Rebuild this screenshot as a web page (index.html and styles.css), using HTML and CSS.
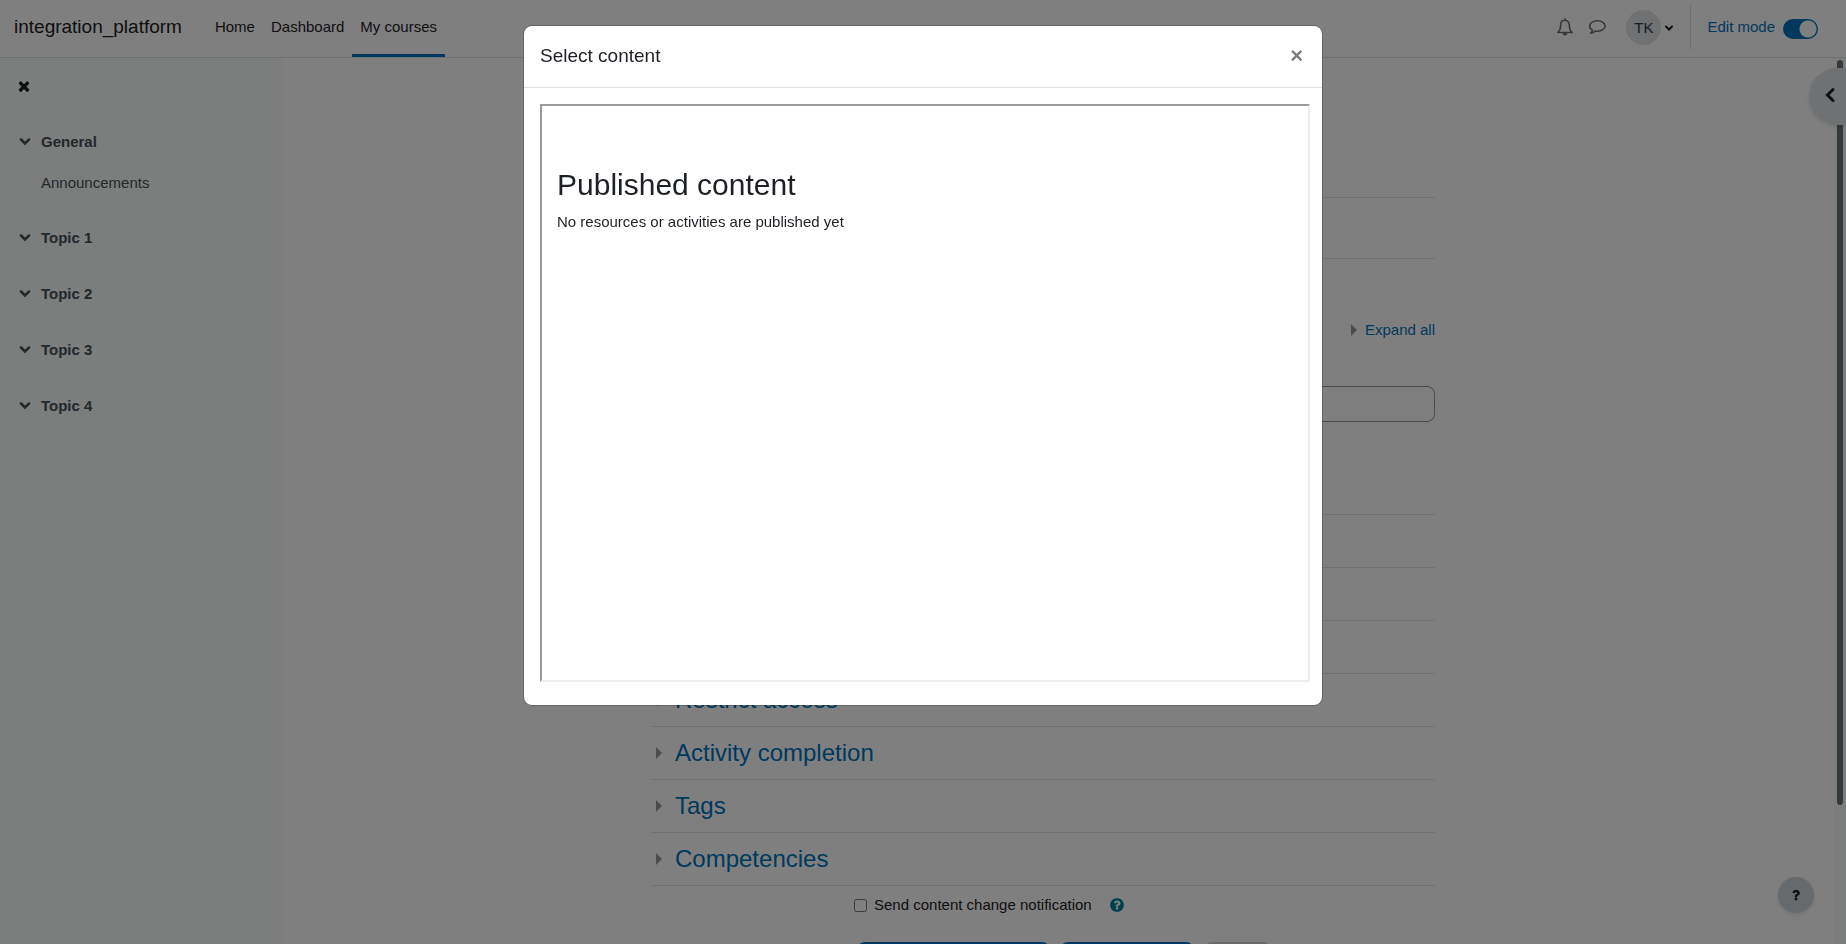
FILE: index.html
```html
<!DOCTYPE html>
<html lang="en">
<head>
  <meta charset="UTF-8">
  <meta name="viewport" content="width=device-width, initial-scale=1.0">
  <title>integration_platform</title>
  <link rel="stylesheet" href="styles.css">
</head>
<body>

  <header class="navbar">
    <a class="brand" href="#">integration_platform</a>
    <nav class="main-nav">
      <a href="#">Home</a>
      <a href="#">Dashboard</a>
      <a class="active" href="#">My courses</a>
    </nav>
    <div class="user-nav">
      <button class="icon-btn" type="button" aria-label="Notifications">
        <svg width="16" height="18" viewBox="0 0 16 18" fill="none" stroke="currentColor" stroke-width="1.6" stroke-linejoin="round">
          <path d="M8 .3v2M8 2.3C5.200 2.300 3.700 4.400 3.700 6.900c0 3.700-.9 5.800-2.900 7.600h14.400c-2-1.800-2.900-3.900-2.900-7.600C12.300 4.400 10.800 2.300 8 2.300z"/>
          <path d="M6.400 15.200a1.600 1.600 0 0 0 3.200 0z" fill="currentColor"/>
        </svg>
      </button>
      <button class="icon-btn" type="button" aria-label="Messages">
        <svg width="18" height="16" viewBox="0 0 18 16" fill="none" stroke="currentColor" stroke-width="1.6" stroke-linejoin="round">
          <path d="M9.400 1.800C5 1.800 1.600 4.100 1.600 7c0 1.700 1.100 3.100 2.900 4.100-.2 1.200-.9 2.200-1.900 3.100 2-.2 3.600-.9 4.800-2.200.6.100 1.300.2 2 .2 4.300 0 7.700-2.300 7.700-5.200S13.700 1.800 9.400 1.800z"/>
        </svg>
      </button>
      <button class="user-menu" type="button">
        <span class="avatar">TK</span>
        <svg width="8" height="8" viewBox="0 0 8 8" fill="none" stroke="currentColor" stroke-width="2" stroke-linecap="round"><path d="M1 3.500l3 3 3-3"/></svg>
      </button>
      <div class="edit-mode">
        <label for="editmode">Edit mode</label>
        <input type="checkbox" id="editmode" checked>
      </div>
    </div>
  </header>

  <div class="page">
    <aside class="drawer">
      <button class="drawer-close" type="button" aria-label="Close course index">
        <svg width="16" height="16" viewBox="0 0 1792 1792" fill="currentColor"><path d="M1490 1322q0 40-28 68l-136 136q-28 28-68 28t-68-28l-294-294-294 294q-28 28-68 28t-68-28l-136-136q-28-28-28-68t28-68l294-294-294-294q-28-28-28-68t28-68l136-136q28-28 68-28t68 28l294 294 294-294q28-28 68-28t68 28l136 136q28 28 28 68t-28 68l-294 294 294 294q28 28 28 68z"/></svg>
      </button>
      <ul class="course-index">
        <li>
          <a class="topic" href="#"><svg class="chevron" viewBox="0 0 12 8"><path d="M2 1.500l4 4 4-4"/></svg>General</a>
          <a class="activity" href="#">Announcements</a>
        </li>
        <li><a class="topic" href="#"><svg class="chevron" viewBox="0 0 12 8"><path d="M2 1.500l4 4 4-4"/></svg>Topic 1</a></li>
        <li><a class="topic" href="#"><svg class="chevron" viewBox="0 0 12 8"><path d="M2 1.500l4 4 4-4"/></svg>Topic 2</a></li>
        <li><a class="topic" href="#"><svg class="chevron" viewBox="0 0 12 8"><path d="M2 1.500l4 4 4-4"/></svg>Topic 3</a></li>
        <li><a class="topic" href="#"><svg class="chevron" viewBox="0 0 12 8"><path d="M2 1.500l4 4 4-4"/></svg>Topic 4</a></li>
      </ul>
    </aside>

    <main class="main">
      <div class="content">
        <div class="page-header"></div>
        <div class="tabs"></div>
        <form>
          <div class="expand-row"><a class="expand" href="#">Expand all</a></div>
          <div class="general">
            <input class="name" type="text" aria-label="Activity name">
          </div>
          <div class="section"></div>
          <div class="section"></div>
          <div class="section"></div>
          <div class="section"><a class="expand" href="#">Restrict access</a></div>
          <div class="section"><a class="expand" href="#">Activity completion</a></div>
          <div class="section"><a class="expand" href="#">Tags</a></div>
          <div class="section"><a class="expand" href="#">Competencies</a></div>
          <div class="notify">
            <input type="checkbox" id="notify">
            <label for="notify">Send content change notification</label>
            <button class="help" type="button" aria-label="Help">
              <svg width="16" height="16" viewBox="0 0 1792 1792" fill="currentColor"><path d="M1024 1376v-192q0-14-9-23t-23-9h-192q-14 0-23 9t-9 23v192q0 14 9 23t23 9h192q14 0 23-9t9-23zm256-672q0-88-55.500-163t-138.500-116-170-41q-243 0-371 213-15 24 8 42l132 100q7 6 19 6 16 0 25-12 53-68 86-92 34-24 86-24 48 0 85.500 26t37.500 59q0 38-20 61t-68 45q-63 28-115.500 86.500t-52.500 125.500v36q0 14 9 23t23 9h192q14 0 23-9t9-23q0-19 21.500-49.500t54.500-49.500q32-18 49-28.500t46-35 44.500-48 28-60.500 12.500-81zm384 192q0 209-103 385.500t-279.500 279.500-385.500 103-385.500-103-279.500-279.500-103-385.500 103-385.500 279.500-279.500 385.500-103 385.500 103 279.500 279.500 103 385.500z"/></svg>
            </button>
          </div>
          <div class="actions">
            <button class="btn btn-return" type="submit" aria-label="Save and return to course"></button>
            <button class="btn btn-display" type="submit" aria-label="Save and display"></button>
            <button class="btn btn-cancel" type="button" aria-label="Cancel"></button>
          </div>
        </form>
      </div>
    </main>

    <div class="scroll-track"><div class="scroll-thumb"></div></div>

    <button class="drawer-toggle" type="button" aria-label="Open block drawer">
      <svg width="10" height="16" viewBox="0 0 10 16" fill="none" stroke="currentColor" stroke-width="3" stroke-linecap="round"><path d="M8 2.500L2.500 8 8 13.500"/></svg>
    </button>
    <button class="footer-help" type="button" aria-label="Help">
      <svg width="18" height="18" viewBox="0 0 1792 1792" fill="currentColor"><path d="M1024 1376v-192q0-14-9-23t-23-9h-192q-14 0-23 9t-9 23v192q0 14 9 23t23 9h192q14 0 23-9t9-23zm256-672q0-88-55.500-163t-138.500-116-170-41q-243 0-371 213-15 24 8 42l132 100q7 6 19 6 16 0 25-12 53-68 86-92 34-24 86-24 48 0 85.500 26t37.500 59q0 38-20 61t-68 45q-63 28-115.500 86.500t-52.500 125.500v36q0 14 9 23t23 9h192q14 0 23-9t9-23q0-19 21.500-49.500t54.500-49.500q32-18 49-28.500t46-35 44.500-48 28-60.500 12.500-81z"/></svg>
    </button>
  </div>

  <div class="backdrop">
    <div class="modal" role="dialog" aria-modal="true" aria-labelledby="modal-title">
      <div class="modal-header">
        <h5 id="modal-title">Select content</h5>
        <button class="modal-close" type="button" aria-label="Close">×</button>
      </div>
      <div class="modal-body">
        <div class="frame">
          <h2>Published content</h2>
          <p>No resources or activities are published yet</p>
        </div>
      </div>
    </div>
  </div>

</body>
</html>
```
FILE: styles.css
```css
* {
  box-sizing: border-box;
}
body {
  margin: 0;
  height: 100vh;
  display: flex;
  flex-direction: column;
  overflow: hidden;
  font-family: "Liberation Sans", Arial, sans-serif;
  font-size: 15px;
  line-height: 22px;
  color: #1d2125;
  background-color: #fff;
}
a {
  color: #0073b8;
  text-decoration: none;
}
button {
  font: inherit;
  color: inherit;
  background: none;
  border: 0;
  padding: 0;
}
svg {
  display: block;
}

/* top bar */
.navbar {
  display: flex;
  flex: none;
  height: 58px;
  padding: 0 28px 0 14px;
  border-bottom: 1px solid #dee2e6;
}
.navbar a {
  color: #1d2125;
}
.brand {
  padding-right: 25px;
  font-size: 19px;
  line-height: 54px;
}
.main-nav {
  display: flex;
}
.main-nav a {
  padding: 0 8px;
  line-height: 54px;
  border-bottom: 3px solid transparent;
}
.main-nav a.active {
  border-bottom-color: #0073b8;
}
.user-nav {
  display: flex;
  align-items: center;
  height: 54px;
  margin-left: auto;
}
.icon-btn {
  margin-right: 15px;
  color: #6a737b;
}
.user-menu {
  display: flex;
  align-items: center;
  gap: 4px;
  margin: 0 17px 0 5px;
}
.avatar {
  width: 35px;
  height: 35px;
  border-radius: 50%;
  line-height: 35px;
  text-align: center;
  color: #343a40;
  background-color: #dee2e6;
}
.edit-mode {
  display: flex;
  align-items: center;
  gap: 8px;
  height: 46px;
  padding-left: 16px;
  border-left: 1px solid #dee2e6;
}
.edit-mode label {
  color: #0073b8;
}
.edit-mode input {
  appearance: none;
  width: 35px;
  height: 20px;
  margin: 4px 0 0;
  border-radius: 10px;
  background: radial-gradient(circle at 25px 10px, #fff 8px, #0073b8 9px);
}

/* page */
.page {
  position: relative;
  flex: 1;
  display: flex;
  min-height: 0;
}
.drawer {
  flex: none;
  width: 283px;
  padding: 20px 16px;
  background-color: #f8fbfa;
}
.drawer-close {
  display: block;
}
.course-index {
  list-style: none;
  margin: 20px 0 0;
  padding: 0;
}
.course-index li {
  padding: 8px 0;
}
.course-index a {
  color: #495057;
}
.topic {
  display: flex;
  align-items: center;
  height: 40px;
  font-weight: bold;
}
.chevron {
  width: 12px;
  height: 8px;
  margin: 0 10px 0 3px;
  fill: none;
  stroke: currentColor;
  stroke-width: 2.5;
  stroke-linecap: round;
}
.activity {
  display: block;
  height: 40px;
  padding-left: 25px;
  line-height: 42px;
}
.main {
  flex: 1;
  min-width: 0;
  padding-right: 31px;
  overflow: hidden;
}
.content {
  max-width: 784px;
  margin: 0 auto;
}
.page-header {
  height: 140px;
  border-bottom: 1px solid #dee2e6;
}
.tabs {
  height: 61px;
  border-bottom: 1px solid #dee2e6;
}
.expand-row {
  display: flex;
  justify-content: flex-end;
  padding: 60px 0 45px;
}
.expand {
  display: flex;
  align-items: center;
}
.expand::before {
  content: "";
  margin-right: 8px;
  border: 6px solid transparent;
  border-left-color: #999;
  border-right-width: 0;
}
.general {
  height: 129px;
  border-bottom: 1px solid #dee2e6;
}
.name {
  display: block;
  width: 75%;
  height: 36px;
  margin-left: auto;
  border: 1px solid #8f959e;
  border-radius: 8px;
  background-color: #fff;
}
.section {
  display: flex;
  align-items: center;
  height: 53px;
  padding-left: 5px;
  border-bottom: 1px solid #dee2e6;
  font-size: 24px;
  line-height: 28px;
}
.section .expand::before {
  margin-right: 13px;
}
.notify {
  display: flex;
  align-items: center;
  padding: 8px 0 0 203px;
}
.notify input {
  margin: 0 7px 0 0;
}
.help {
  margin-left: 17px;
  color: #008196;
}
.actions {
  display: flex;
  gap: 10px;
  padding: 26px 0 0 206px;
}
.btn {
  height: 36px;
  border-radius: 8px;
  background-color: #0073b8;
}
.btn-return {
  width: 193px;
}
.btn-display {
  width: 134px;
}
.btn-cancel {
  width: 67px;
  background-color: #ced4da;
}
.scroll-track {
  flex: none;
  width: 12px;
  padding: 2px 3px;
  background-color: #f8fbfa;
}
.scroll-thumb {
  height: 84.5%;
  border-radius: 3px;
  background-color: #6a737b;
}
.drawer-toggle {
  position: absolute;
  top: 10px;
  right: 0;
  width: 37px;
  height: 57px;
  padding: 0 0 4px 16px;
  border-radius: 29px 0 0 29px;
  background-color: #dee2e6;
  box-shadow: 0 2px 4px rgba(0, 0, 0, 0.1);
}
.footer-help {
  position: absolute;
  right: 32px;
  bottom: 31px;
  display: flex;
  align-items: center;
  justify-content: center;
  width: 36px;
  height: 36px;
  border-radius: 50%;
  background-color: #ced4da;
  box-shadow: 0 2px 4px rgba(0, 0, 0, 0.1);
}

/* dialog */
.backdrop {
  position: fixed;
  inset: 0;
  padding-top: 25px;
  background-color: rgba(0, 0, 0, 0.5);
}
.modal {
  max-width: 800px;
  margin: 0 auto;
  border: 1px solid rgba(0, 0, 0, 0.2);
  border-radius: 9px;
  background-color: #fff;
  background-clip: padding-box;
}
.modal-header {
  display: flex;
  align-items: center;
  justify-content: space-between;
  height: 62px;
  padding: 0 19px 2px 16px;
  border-bottom: 1px solid #dee2e6;
}
.modal-header h5 {
  margin: 0;
  font-size: 19px;
  font-weight: normal;
}
.modal-close {
  font-size: 22px;
  font-weight: bold;
  color: #7f7f7f;
}
.modal-body {
  padding: 16px 12px 23px 16px;
}
.frame {
  height: 578px;
  padding: 61px 15px;
  border: 2px solid #eee;
  border-top-color: #9a9a9a;
  border-left-color: #9a9a9a;
}
.frame h2 {
  margin: 0 0 8px;
  font-size: 30px;
  font-weight: normal;
  line-height: 36px;
}
.frame p {
  margin: 0;
}
```
